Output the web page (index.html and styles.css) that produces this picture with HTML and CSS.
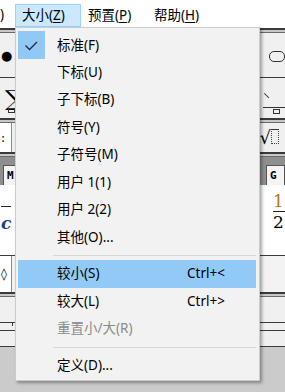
FILE: index.html
```html
<!DOCTYPE html>
<html lang="zh-CN">
<head>
  <meta charset="UTF-8">
  <title>大小菜单</title>
  <link rel="stylesheet" href="styles.css">
</head>
<body>
  <div class="app">
    <div class="menubar">
      <span class="bar-item cut">)</span>
      <span class="bar-item open">大小(<u>Z</u>)</span>
      <span class="bar-item">预置(<u>P</u>)</span>
      <span class="bar-item">帮助(<u>H</u>)</span>
    </div>

    <!-- toolbar behind the open menu -->
    <div class="toolbar">
      <div class="rule double"></div>
      <div class="row row-sym">
        <span class="l">● (</span>
        <span class="r">) <i class="pill"></i></span>
      </div>
      <div class="rule"></div>
      <div class="row row-sum">
        <span class="l sigma">∑<i class="slot"></i></span>
        <span class="r frac-glyph">⸌<i class="slot"></i></span>
      </div>
      <div class="rule double"></div>
      <div class="row row-box">
        <span class="l btn">:</span>
        <span class="r root">√<i class="dotbox"></i></span>
      </div>
      <div class="rule double"></div>
      <div class="tabs">
        <span class="tab">M</span>
        <span class="tab">G</span>
      </div>
      <div class="panel">
        <div class="l col-left">
          <span class="dash"></span>
          <span class="var">c</span>
        </div>
        <div class="r frac">
          <span class="num">1</span>
          <span class="den">2</span>
        </div>
      </div>
      <div class="rule"></div>
      <div class="row row-a">
        <span class="l btn">◊</span>
      </div>
      <div class="rule double"></div>
      <div class="row row-b"></div>
      <div class="rule"></div>
      <div class="row row-c"><span class="tick"></span></div>
      <div class="rule"></div>
      <div class="row row-d"></div>
      <div class="rule"></div>
      <div class="desk"></div>
    </div>

    <div class="dropdown">
      <div class="item">
        <span class="gutter checked">
          <svg width="27" height="28" viewBox="0 0 27 28"><polyline points="7.5,14.5 11.5,18.5 19,11" fill="none" stroke="#2b2b2b" stroke-width="1.3"/></svg>
        </span>
        <span class="label">标准(F)</span>
      </div>
      <div class="item"><span class="gutter"></span><span class="label">下标(U)</span></div>
      <div class="item"><span class="gutter"></span><span class="label">子下标(B)</span></div>
      <div class="item"><span class="gutter"></span><span class="label">符号(Y)</span></div>
      <div class="item"><span class="gutter"></span><span class="label">子符号(M)</span></div>
      <div class="item"><span class="gutter"></span><span class="label">用户 1(1)</span></div>
      <div class="item"><span class="gutter"></span><span class="label">用户 2(2)</span></div>
      <div class="item"><span class="gutter"></span><span class="label">其他(O)...</span></div>
      <div class="sep"></div>
      <div class="item hot"><span class="gutter"></span><span class="label">较小(S)</span><span class="keys">Ctrl+&lt;</span></div>
      <div class="item"><span class="gutter"></span><span class="label">较大(L)</span><span class="keys">Ctrl+&gt;</span></div>
      <div class="item disabled"><span class="gutter"></span><span class="label">重置小/大(R)</span></div>
      <div class="sep"></div>
      <div class="item"><span class="gutter"></span><span class="label">定义(D)...</span></div>
    </div>
  </div>
</body>
</html>
```

FILE: styles.css
```css
body, html {
  margin: 0;
  padding: 0;
  width: 285px;
  height: 392px;
  overflow: hidden;
  background: #cbcbcb;
}

.app {
  position: relative;
  width: 285px;
  height: 392px;
  font-family: "Noto Sans", "Noto Sans CJK SC", sans-serif;
  font-size: 13.5px;
  color: #000;
}

/* menu bar */
.menubar {
  height: 28px;
  box-sizing: border-box;
  padding-top: 4px;
  background: #fff;
  display: flex;
  white-space: nowrap;
}

.bar-item {
  width: 66px;
  height: 23px;
  box-sizing: border-box;
  line-height: 21px;
  padding: 0 0 0 6px;
  border: 1px solid transparent;
  flex-shrink: 0;
}

.bar-item.cut {
  width: 15px;
  padding: 0;
  border: none;
}

.bar-item.open {
  background: #cce8ff;
  border-color: #99d1ff;
}

.bar-item u {
  text-underline-offset: 2px;
}

/* toolbar behind */
.toolbar {
  font-family: "DejaVu Serif", serif;
}

.rule {
  height: 1px;
  background: #3a3a3a;
}

.rule.double {
  height: 2px;
  border-top: 2px solid #3a3a3a;
  border-bottom: 1px solid #6a6a6a;
  background: #c8c8c8;
}

.row {
  display: flex;
  justify-content: space-between;
  align-items: center;
  background: #f0f0f0;
  position: relative;
}

.row-sym { height: 44px; font-size: 13px; }
.row-sum { height: 40px; }
.row-box { height: 29px; }
.row-a { height: 36px; background: #f3f3f3; }
.row-b { height: 25px; }
.row-c { height: 7px; }
.row-d { height: 15px; }

.l { padding-left: 1px; }
.r { padding-right: 0; }

.pill {
  display: inline-block;
  width: 14px;
  height: 9px;
  border: 1px solid #333;
  border-radius: 5px;
  margin-left: 8px;
  vertical-align: middle;
}

.sigma {
  font-size: 22px;
  padding-left: 5px;
  position: relative;
}

.slot {
  position: absolute;
  width: 5px;
  height: 3px;
  border: 1px solid #333;
  left: 8px;
  bottom: -2px;
}

.frac-glyph {
  position: relative;
  width: 22px;
  font-size: 14px;
  border-bottom: 1px solid #333;
}

.frac-glyph .slot {
  left: 10px;
  bottom: -7px;
}

.btn {
  width: 12px;
  height: 100%;
  box-sizing: border-box;
  background: #fff;
  border-right: 1px solid #8a8a8a;
  font-size: 12px;
  display: flex;
  align-items: center;
}

.root {
  font-size: 18px;
  padding-right: 6px;
}

.dotbox {
  display: inline-block;
  width: 6px;
  height: 13px;
  border: 1px dotted #444;
  border-top: 1px solid #333;
}

.tabs {
  height: 28px;
  background: #8f8f8f;
  display: flex;
  justify-content: space-between;
  align-items: flex-end;
}

.tab {
  height: 19px;
  width: 14px;
  background: #f4f4f4;
  border: 1px solid #555;
  border-bottom: none;
  font: bold 11px "DejaVu Sans Mono", monospace;
  line-height: 19px;
  padding-left: 3px;
}

.tab:first-child {
  margin-left: 3px;
  width: 10px;
}

.panel {
  height: 70px;
  background: #fff;
  display: flex;
  justify-content: space-between;
}

.col-left {
  display: flex;
  flex-direction: column;
  padding-top: 21px;
}

.dash {
  width: 10px;
  height: 1px;
  background: #222;
}

.var {
  font-style: italic;
  font-weight: bold;
  color: #1c3f8f;
  font-size: 17px;
  margin-top: 6px;
}

.frac {
  display: flex;
  flex-direction: column;
  width: 12px;
  padding-top: 7px;
  font-size: 17px;
  line-height: 18px;
}

.num {
  color: #b8721e;
  border-bottom: 1px solid #222;
  padding-bottom: 1px;
}

.den {
  padding-top: 1px;
}

.tick {
  position: absolute;
  left: 12px;
  top: 0;
  width: 1px;
  height: 3px;
  background: #333;
}

.desk {
  height: 60px;
  background: #cbcbcb;
}

/* dropdown menu */
.dropdown {
  position: absolute;
  left: 15px;
  top: 27px;
  width: 245px;
  box-sizing: border-box;
  padding: 3px 0 1px;
  background: #f2f2f2;
  border: 1px solid #cccccc;
  box-shadow: 2px 2px 3px rgba(0, 0, 0, 0.35);
}

.item {
  display: grid;
  grid-template-columns: 27px 130px auto;
  column-gap: 12px;
  align-items: center;
  height: 27.5px;
  margin: 0 3px 0 2px;
  white-space: nowrap;
}

.item .label,
.item .keys {
  line-height: 27px;
}

.item .keys {
  margin-left: -12px;
}

.gutter {
  height: 100%;
}

.gutter.checked {
  height: 28px;
  background: #90c8f6;
}

.gutter svg {
  display: block;
}

.item.hot {
  background: #91c9f7;
}

.item.disabled {
  color: #8a8a8a;
}

.sep {
  height: 1px;
  margin: 4px 3px 4px 37px;
  background: #d7d7d7;
}
```
